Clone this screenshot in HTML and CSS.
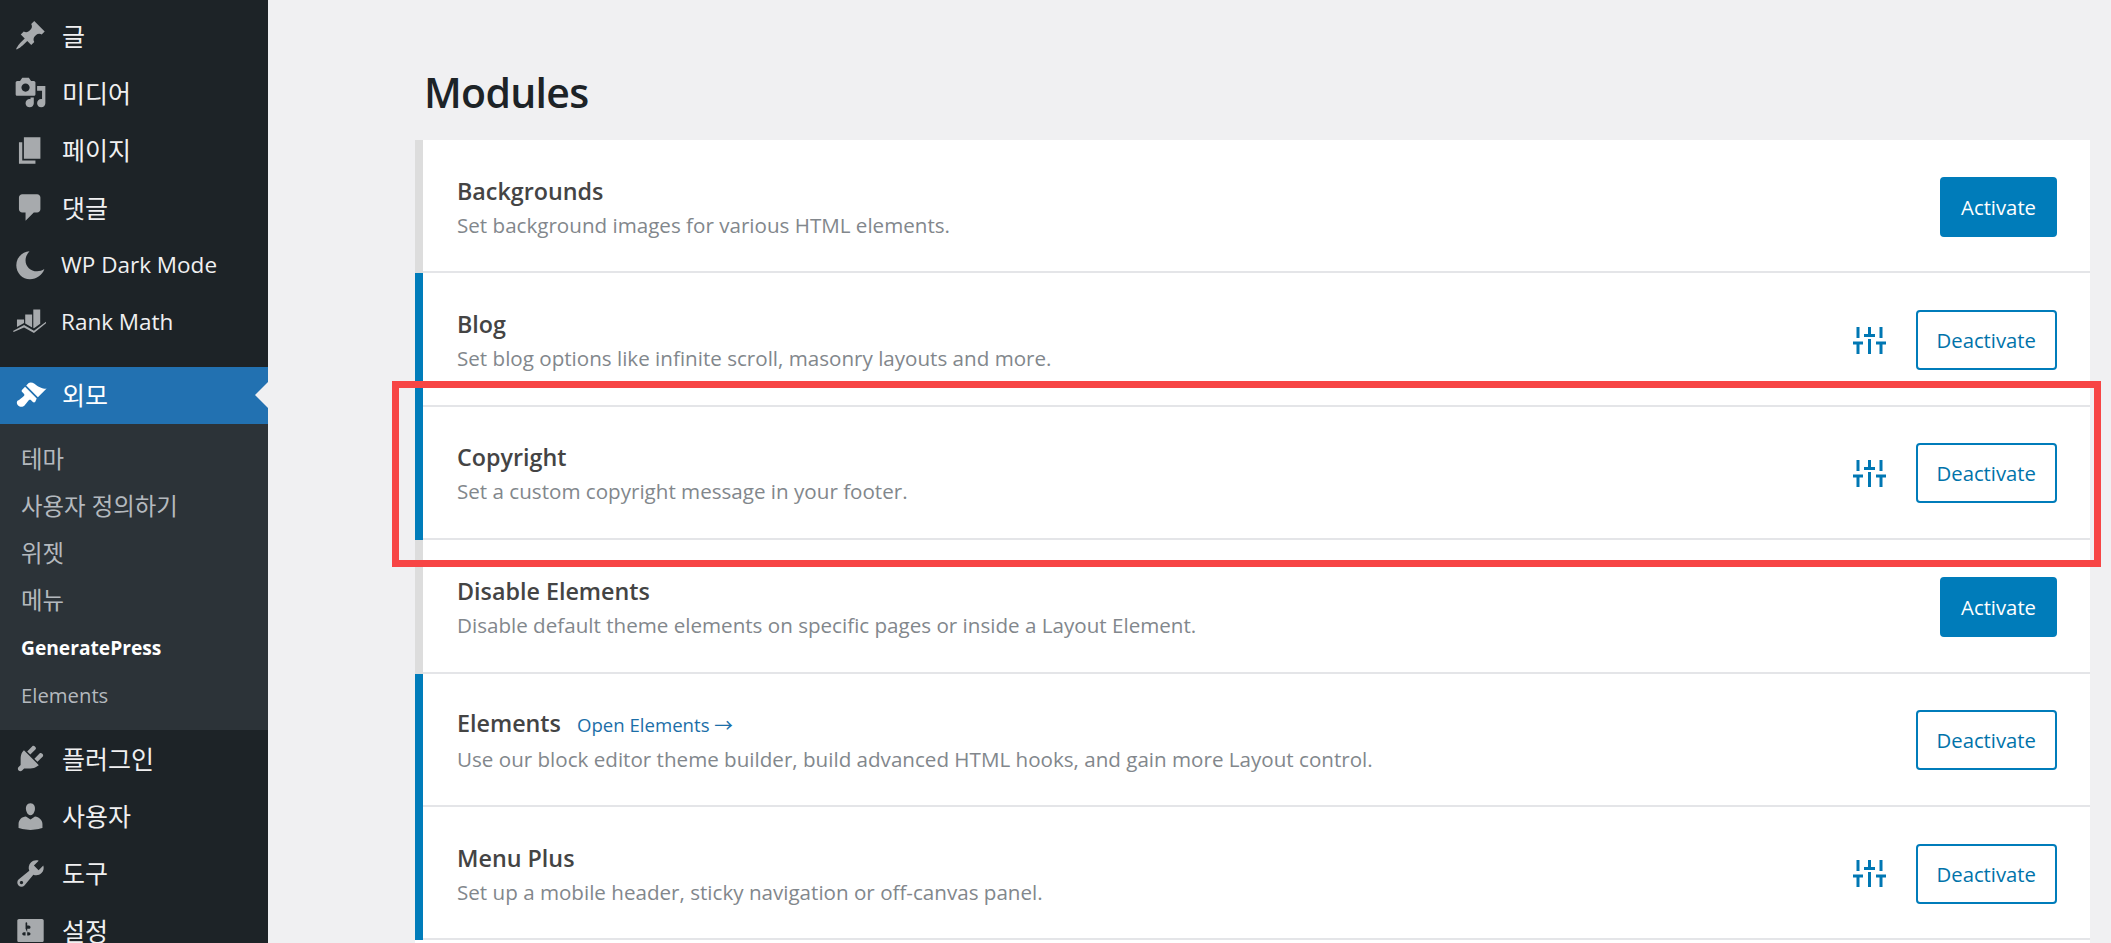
FILE: index.html
```html
<!DOCTYPE html>
<html lang="ko">
<head>
    <meta charset="UTF-8">
    <meta name="viewport" content="width=device-width, initial-scale=1.0">
    <title>Modules</title>
    <link rel="stylesheet" href="styles.css">
</head>
<body>
    <div class="layout">
        <nav class="sidebar">
            <ul class="menu">
                <li class="menu-item"><svg class="menu-icon" viewBox="0 0 20 20"><path d="M10.44 3.02l1.82-1.82 6.36 6.35-1.83 1.82c-1.05-.68-2.48-.57-3.41.36l-.75.75c-.92.93-1.04 2.35-.35 3.41l-1.83 1.82-2.41-2.41-2.8 2.79c-.42.42-3.38 2.71-3.8 2.29s1.86-3.39 2.28-3.81l2.79-2.79L4.1 9.36l1.83-1.82c1.05.69 2.48.57 3.4-.36l.75-.75c.93-.92 1.05-2.35.36-3.41z"/></svg>글</li>
                <li class="menu-item"><svg class="menu-icon" viewBox="0 0 20 20"><path d="M13 11V4c0-.55-.45-1-1-1h-1.67L9 1H5L3.67 3H2c-.55 0-1 .45-1 1v7c0 .55.45 1 1 1h10c.55 0 1-.45 1-1zM7 4.5c1.38 0 2.5 1.12 2.5 2.5S8.38 9.5 7 9.5 4.5 8.38 4.5 7 5.62 4.5 7 4.5zM14 6h5v10.5c0 1.38-1.12 2.5-2.5 2.5S14 17.88 14 16.5s1.12-2.5 2.5-2.5c.17 0 .34.02.5.05V9h-3V6zm-4 8.05V13h2v3.5c0 1.38-1.12 2.5-2.5 2.5S7 17.88 7 16.5 8.12 14 9.5 14c.17 0 .34.02.5.05z"/></svg>미디어</li>
                <li class="menu-item"><svg class="menu-icon" viewBox="0 0 20 20"><path d="M6 15V2h10v13H6zm-1 1h8v2H3V5h2v11z"/></svg>페이지</li>
                <li class="menu-item"><svg class="menu-icon" viewBox="0 0 20 20"><path d="M5 2h9c1.1 0 2 .9 2 2v7c0 1.1-.9 2-2 2h-2l-5 5v-5H5c-1.1 0-2-.9-2-2V4c0-1.1.9-2 2-2z"/></svg>댓글</li>
                <li class="menu-item lang-en"><svg class="menu-icon" viewBox="0 0 20 20"><path d="M10 2C5.200 2.500 2 5.900 2 10.500c0 4.700 3.700 8.500 8.300 8.500 4 0 7.600-2.600 8.700-6.200-1.300.9-2.900 1.300-4.400 1.300-4 0-7-3-7-6.600 0-2.100 1-4.100 2.400-5.500z"/></svg>WP Dark Mode</li>
                <li class="menu-item lang-en"><svg class="menu-icon" viewBox="0 0 20 20"><path d="M2.400 8.200h4.300v2.100l-4.300 2.500zM7.400 5.200h4.200V13l-4.200-2.400zM12.300 2.100h4.200v8.700l-3.800 2.700-.4-.2zM0 15.200l6.700-3.700 6 3.500 7.300-5.500v1l-7.300 5.900-6-3.400-6.300 2.800z"/></svg>Rank Math</li>
            </ul>
            <ul class="menu menu-open">
                <li class="menu-item is-current"><svg class="menu-icon" viewBox="0 0 20 20"><path d="M14.48 11.06L7.41 3.99l1.5-1.5c.5-.56 2.3-.47 3.51.32 1.21.8 1.43 1.28 2.91 2.1 1.18.64 2.45 1.26 4.45.85zm-.71.71L6.7 4.7 4.93 6.47c-.39.39-.39 1.02 0 1.41l1.06 1.06c.39.39.39 1.03 0 1.42-.6.6-1.43 1.11-2.21 1.69-.35.26-.7.53-1.01.84C1.43 13.23 1.43 15 2.5 16.07c1.07 1.07 2.84 1.07 3.91 0 .31-.31.58-.66.84-1.01.58-.78 1.09-1.61 1.69-2.21.39-.39 1.03-.39 1.42 0l1.06 1.06c.39.39 1.02.39 1.41 0z"/></svg>외모</li>
                <li class="submenu">
                    <ul>
                        <li class="submenu-item">테마</li>
                        <li class="submenu-item">사용자 정의하기</li>
                        <li class="submenu-item">위젯</li>
                        <li class="submenu-item">메뉴</li>
                        <li class="submenu-item lang-en is-current">GeneratePress</li>
                        <li class="submenu-item lang-en">Elements</li>
                    </ul>
                </li>
                <li class="menu-item"><svg class="menu-icon" viewBox="0 0 20 20"><path d="M13.11 4.36L9.87 7.6 8 5.73l3.24-3.24c.35-.34 1.05-.2 1.56.32.52.51.66 1.21.31 1.55zm-8 1.77l.91-1.12 9.01 9.01-1.19.84c-.71.71-2.63 1.16-3.82 1.16H6.14L4.9 17.26c-.59.59-1.54.59-2.12 0-.59-.58-.59-1.53 0-2.12l1.24-1.24v-3.88c0-1.13.4-3.19 1.09-3.89zm7.26 3.97l3.24-3.24c.34-.35 1.04-.21 1.55.31.52.51.66 1.21.31 1.55l-3.24 3.25z"/></svg>플러그인</li>
                <li class="menu-item"><svg class="menu-icon" viewBox="0 0 20 20"><path d="M10 9.25c-2.27 0-2.73-3.44-2.73-3.44C7 4.02 7.82 2 9.97 2c2.16 0 2.98 2.02 2.71 3.81 0 0-.41 3.44-2.68 3.44zm0 2.57L12.72 10c2.39 0 4.52 2.33 4.52 4.53v2.49s-3.65 1.13-7.24 1.13c-3.65 0-7.24-1.13-7.24-1.13v-2.49c0-2.25 1.94-4.48 4.47-4.48z"/></svg>사용자</li>
                <li class="menu-item"><svg class="menu-icon" viewBox="0 0 20 20"><path d="M16.68 9.77c-1.34 1.34-3.3 1.67-4.95.99l-5.41 6.52c-.99.99-2.59.99-3.58 0s-.99-2.59 0-3.57l6.52-5.42c-.68-1.65-.35-3.61.99-4.95 1.28-1.28 3.12-1.62 4.72-1.06l-2.89 2.89 2.82 2.82 2.86-2.87c.53 1.58.18 3.39-1.08 4.65zM3.81 16.21c.4.39 1.04.39 1.43 0 .4-.4.4-1.04 0-1.43-.39-.4-1.03-.4-1.43 0-.39.39-.39 1.03 0 1.43z"/></svg>도구</li>
                <li class="menu-item"><svg class="menu-icon" viewBox="0 0 20 20"><path d="M18 16V4c0-.55-.45-1-1-1H3c-.55 0-1 .45-1 1v12c0 .55.45 1 1 1h14c.55 0 1-.45 1-1zM8 11h1c.55 0 1 .45 1 1s-.45 1-1 1H8v1.5c0 .28-.22.5-.5.5s-.5-.22-.5-.5V13H6c-.55 0-1-.45-1-1s.45-1 1-1h1V5.5c0-.28.22-.5.5-.5s.5.22.5.5V7h1c.55 0 1 .45 1 1s-.45 1-1 1h-1v5.5c0 .28-.22.5-.5.5s-.5-.22-.5-.5V9z"/></svg>설정</li>
            </ul>
        </nav>

        <main class="content">
            <h1 class="page-title">Modules</h1>
            <div class="modules">
                <div class="module">
                    <div class="module-text">
                        <div class="module-name">Backgrounds</div>
                        <div class="module-desc">Set background images for various HTML elements.</div>
                    </div>
                    <div class="module-actions"><button class="btn btn-primary">Activate</button></div>
                </div>
                <div class="module is-active">
                    <div class="module-text">
                        <div class="module-name">Blog</div>
                        <div class="module-desc">Set blog options like infinite scroll, masonry layouts and more.</div>
                    </div>
                    <div class="module-actions">
                        <svg class="settings-icon" viewBox="0 0 33 27"><path d="M5 0v11M5 16v11M0 16h10M16.500 0v8.500M11 8.500h11M16.500 12v15M28 0v11M28 16v11M23 16h10"/></svg>
                        <button class="btn btn-outline">Deactivate</button>
                    </div>
                </div>
                <div class="module is-active">
                    <div class="module-text">
                        <div class="module-name">Copyright</div>
                        <div class="module-desc">Set a custom copyright message in your footer.</div>
                    </div>
                    <div class="module-actions">
                        <svg class="settings-icon" viewBox="0 0 33 27"><path d="M5 0v11M5 16v11M0 16h10M16.500 0v8.500M11 8.500h11M16.500 12v15M28 0v11M28 16v11M23 16h10"/></svg>
                        <button class="btn btn-outline">Deactivate</button>
                    </div>
                </div>
                <div class="module">
                    <div class="module-text">
                        <div class="module-name">Disable Elements</div>
                        <div class="module-desc">Disable default theme elements on specific pages or inside a Layout Element.</div>
                    </div>
                    <div class="module-actions"><button class="btn btn-primary">Activate</button></div>
                </div>
                <div class="module is-active">
                    <div class="module-text">
                        <div class="module-name">Elements <a class="module-link" href="#">Open Elements →</a></div>
                        <div class="module-desc">Use our block editor theme builder, build advanced HTML hooks, and gain more Layout control.</div>
                    </div>
                    <div class="module-actions"><button class="btn btn-outline">Deactivate</button></div>
                </div>
                <div class="module is-active">
                    <div class="module-text">
                        <div class="module-name">Menu Plus</div>
                        <div class="module-desc">Set up a mobile header, sticky navigation or off-canvas panel.</div>
                    </div>
                    <div class="module-actions">
                        <svg class="settings-icon" viewBox="0 0 33 27"><path d="M5 0v11M5 16v11M0 16h10M16.500 0v8.500M11 8.500h11M16.500 12v15M28 0v11M28 16v11M23 16h10"/></svg>
                        <button class="btn btn-outline">Deactivate</button>
                    </div>
                </div>
            </div>
        </main>
    </div>
    <div class="highlight"></div>
</body>
</html>
```

FILE: styles.css
```css
* {
    box-sizing: border-box;
}
html, body {
    height: 100%;
    margin: 0;
    overflow: hidden;
}
body {
    font-family: "Open Sans", "Noto Sans CJK KR", sans-serif;
    background-color: #f0f0f2;
    color: #1d2327;
}
ul {
    list-style: none;
    margin: 0;
    padding: 0;
}
.layout {
    display: flex;
    height: 943px;
}

/* sidebar */
.sidebar {
    width: 268px;
    flex-shrink: 0;
    padding-top: 7px;
    background-color: #1d2327;
}
.menu-open {
    margin-top: 16px;
}
.menu-item {
    position: relative;
    display: flex;
    align-items: center;
    height: 57.3px;
    padding-left: 14px;
    font-size: 25px;
    line-height: 30px;
    color: #f0f0f1;
}
.menu-item.lang-en {
    padding-left: 13px;
    font-size: 22.5px;
}
.menu-icon {
    width: 33px;
    height: 33px;
    margin-right: 15px;
    flex-shrink: 0;
    fill: #a7aaad;
}
.menu-item.is-current {
    background-color: #2271b1;
    color: #fff;
}
.menu-item.is-current .menu-icon {
    fill: #fff;
}
.menu-item.is-current::after {
    content: "";
    position: absolute;
    right: 0;
    top: 15px;
    border: 13px solid transparent;
    border-left-width: 0;
    border-right-color: #f0f0f2;
}
.submenu {
    padding: 11px 0 12px;
    background-color: #2c3338;
}
.submenu-item {
    display: flex;
    align-items: center;
    height: 47.2px;
    padding-left: 21px;
    font-size: 23.4px;
    line-height: 30px;
    color: #b4b9be;
}
.submenu-item.lang-en {
    font-size: 20.3px;
}
.submenu-item.is-current {
    padding-top: 2px;
    color: #fff;
    font-size: 19.2px;
    font-weight: 700;
}

/* content */
.content {
    flex: 1;
    padding: 0 21px 0 147px;
}
.page-title {
    height: 140px;
    margin: 0;
    padding: 61px 0 0 9px;
    font-size: 41px;
    font-weight: 600;
    letter-spacing: -0.7px;
    line-height: 62px;
    color: #1d2327;
}
.modules {
    padding-bottom: 3px;
    background-color: #fff;
}
.module {
    position: relative;
    display: flex;
    align-items: center;
    justify-content: space-between;
    height: 133.4px;
    padding: 0 33px 0 34px;
    border-left: 8px solid #ddd;
    background-color: #fff;
}
.module::after {
    content: "";
    position: absolute;
    left: 0;
    right: 0;
    bottom: 0;
    height: 2px;
    background-color: #e4e5e8;
}
.module.is-active {
    border-left-color: #007cba;
}
.module-name {
    font-size: 23.3px;
    font-weight: 600;
    line-height: 32px;
    color: #444;
}
.module-link {
    margin-left: 10px;
    font-size: 18.6px;
    font-weight: 400;
    color: #1b6ea8;
    text-decoration: none;
}
.module-desc {
    margin-top: 4px;
    font-size: 20.6px;
    line-height: 28px;
    color: #82878c;
}
.module-actions {
    display: flex;
    align-items: center;
    gap: 30px;
}
.settings-icon {
    width: 33px;
    height: 27px;
    fill: none;
    stroke: #0077b3;
    stroke-width: 3;
}
.btn {
    height: 60px;
    padding: 0 19px;
    border-radius: 4px;
    font-family: inherit;
    font-size: 20.3px;
}
.btn-primary {
    border: 2px solid #007cba;
    background-color: #007cba;
    color: #fff;
}
.btn-outline {
    border: 2px solid #007cba;
    background-color: #fff;
    color: #0073aa;
}

/* red box drawn over the screenshot */
.highlight {
    position: absolute;
    left: 392px;
    top: 381px;
    width: 1709px;
    height: 186px;
    border: 7px solid #f74545;
}
```
